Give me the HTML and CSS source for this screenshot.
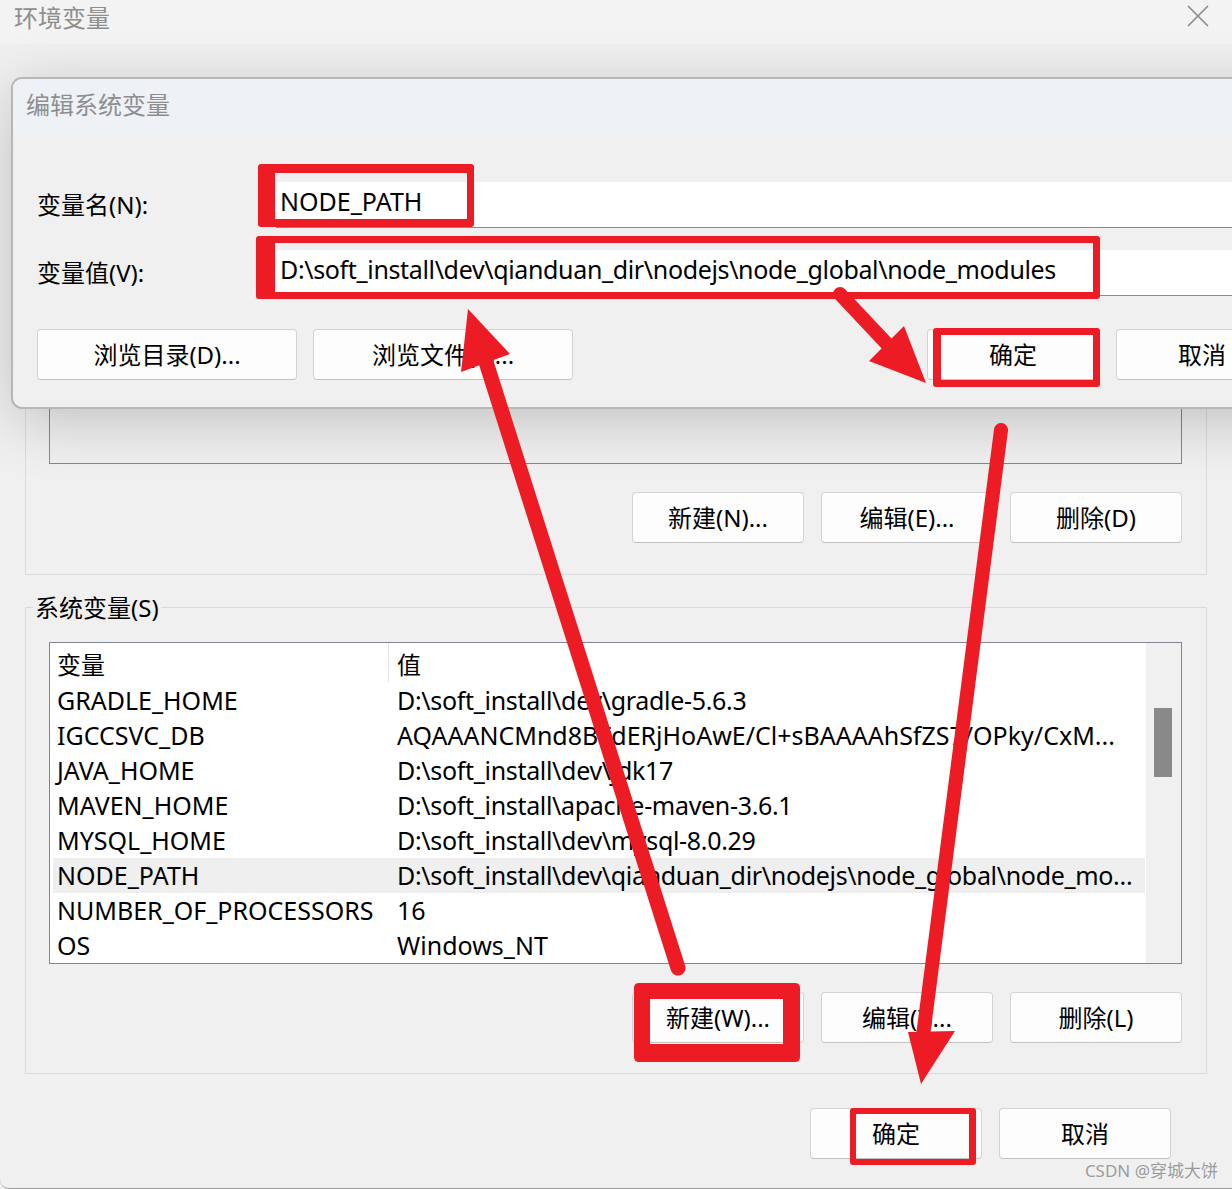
FILE: index.html
```html
<!DOCTYPE html>
<html lang="zh-CN">
<head>
<meta charset="utf-8">
<title>环境变量</title>
<link rel="stylesheet" href="styles.css">
</head>
<body>
<div class="window">
  <div class="titlebar">
    <span class="title">环境变量</span>
    <svg class="close" width="22" height="22" viewBox="0 0 22 22"><path d="M1 1 L21 21 M21 1 L1 21" stroke="#8a8a8a" stroke-width="1.6" fill="none"/></svg>
  </div>

  <div class="main">
    <div class="group group-user">
      <div class="listbox listbox-user"></div>
      <div class="btnrow">
        <button class="btn">新建(N)...</button>
        <button class="btn">编辑(E)...</button>
        <button class="btn">删除(D)</button>
      </div>
    </div>

    <div class="group group-sys">
      <div class="group-title">系统变量(S)</div>
      <div class="listbox listbox-sys">
        <div class="list-main">
          <div class="list-head">
            <span class="c1">变量</span><span class="sep"></span><span class="c2">值</span>
          </div>
          <div class="row"><span class="c1">GRADLE_HOME</span><span class="c2 path">D:\soft_install\dev\gradle-5.6.3</span></div>
          <div class="row"><span class="c1">IGCCSVC_DB</span><span class="c2">AQAAANCMnd8BFdERjHoAwE/Cl+sBAAAAhSfZS7/OPky/CxM...</span></div>
          <div class="row"><span class="c1">JAVA_HOME</span><span class="c2 path">D:\soft_install\dev\jdk17</span></div>
          <div class="row"><span class="c1">MAVEN_HOME</span><span class="c2 path">D:\soft_install\apache-maven-3.6.1</span></div>
          <div class="row"><span class="c1">MYSQL_HOME</span><span class="c2 path">D:\soft_install\dev\mysql-8.0.29</span></div>
          <div class="row sel"><span class="c1">NODE_PATH</span><span class="c2 path">D:\soft_install\dev\qianduan_dir\nodejs\node_global\node_mo...</span></div>
          <div class="row"><span class="c1">NUMBER_OF_PROCESSORS</span><span class="c2">16</span></div>
          <div class="row"><span class="c1">OS</span><span class="c2">Windows_NT</span></div>
        </div>
        <div class="scrollbar"><div class="thumb"></div></div>
      </div>
      <div class="btnrow">
        <button class="btn">新建(W)...</button>
        <button class="btn">编辑(I)...</button>
        <button class="btn">删除(L)</button>
      </div>
    </div>

    <div class="footer">
      <button class="btn">确定</button>
      <button class="btn">取消</button>
    </div>
  </div>

  <div class="dialog">
    <div class="dlg-title">编辑系统变量</div>
    <div class="dlg-body">
      <div class="field">
        <span class="field-label">变量名(N):</span>
        <div class="input">NODE_PATH</div>
      </div>
      <div class="field field-2">
        <span class="field-label">变量值(V):</span>
        <div class="input input-long">D:\soft_install\dev\qianduan_dir\nodejs\node_global\node_modules</div>
      </div>
      <div class="dlg-btns">
        <button class="btn btn-wide">浏览目录(D)...</button>
        <button class="btn btn-wide">浏览文件(F)...</button>
        <button class="btn btn-ok">确定</button>
        <button class="btn">取消</button>
      </div>
    </div>
  </div>

  <svg class="annot" width="1232" height="1189" viewBox="0 0 1232 1189">
    <g fill="#ed1c24" fill-rule="evenodd">
      <path d="M261 164 H471 Q474 164 474 167 V224 Q474 227 471 227 H261 Q258 227 258 224 V167 Q258 164 261 164 Z M275 173 V219 H467 V173 Z"/>
      <path d="M259 236 H1097 Q1100 236 1100 239 V296 Q1100 299 1097 299 H259 Q256 299 256 296 V239 Q256 236 259 236 Z M275 243 V292 H1093 V243 Z"/>
      <path d="M936 328 H1097 Q1100 328 1100 331 V384 Q1100 387 1097 387 H936 Q933 387 933 384 V331 Q933 328 936 328 Z M941 335 V380 H1093 V335 Z"/>
      <path d="M639 983 H795 Q800 983 800 988 V1057 Q800 1062 795 1062 H639 Q634 1062 634 1057 V988 Q634 983 639 983 Z M650 999 V1044 H783 V999 Z"/>
      <path d="M853 1108 H973 Q976 1108 976 1111 V1162 Q976 1165 973 1165 H853 Q850 1165 850 1162 V1111 Q850 1108 853 1108 Z M856 1114 V1159 H969 V1114 Z"/>
    </g>
    <g stroke="#ed1c24" stroke-linecap="round" fill="none">
      <line x1="678" y1="968" x2="486" y2="362" stroke-width="15"/>
      <line x1="840" y1="294" x2="888" y2="345" stroke-width="14"/>
      <line x1="1001" y1="430" x2="923" y2="1036" stroke-width="14"/>
    </g>
    <g fill="#ed1c24">
      <polygon points="468,309 461,372 510,354"/>
      <polygon points="926,383 869,361 904,326"/>
      <polygon points="908,1032 955,1031 921,1084"/>
    </g>
  </svg>

  <div class="watermark">CSDN @穿城大饼</div>
</div>
</body>
</html>
```

FILE: styles.css
```css
html, body {
  margin: 0;
  padding: 0;
  overflow: hidden;
  background: #f0f0f0;
}

body {
  font-family: "Noto Sans", "Noto Sans CJK SC", sans-serif;
  font-size: 24px;
  color: #000;
}

.window {
  position: relative;
  width: 1232px;
  height: 1189px;
  box-sizing: border-box;
  background: #f0f0f0;
  border-bottom: 1px solid #9a9a9a;
  border-bottom-left-radius: 9px;
  overflow: hidden;
}

/* ---------- title bar ---------- */
.titlebar {
  height: 44px;
  box-sizing: border-box;
  background: #f3f3f3;
  display: flex;
  justify-content: space-between;
  align-items: flex-start;
  padding: 2px 23px 0 14px;
}

.title {
  color: #8e8e8e;
  font-size: 24px;
  line-height: 30px;
  font-family: "Noto Sans CJK SC", sans-serif;
}

.close {
  margin-top: 3px;
}

/* ---------- main content ---------- */
.main {
  padding: 0 25px;
}

.group {
  border: 1px solid #dadada;
  box-sizing: border-box;
  display: flex;
  flex-direction: column;
}

.group-user {
  margin-top: 46px;
  height: 485px;
  justify-content: flex-end;
  padding: 0 24px 31px 23px;
}

.listbox {
  border: 1px solid #83868e;
  box-sizing: border-box;
}

.listbox-user {
  height: 300px;
}

.btnrow {
  display: flex;
  justify-content: flex-end;
  gap: 17px;
  margin-top: 28px;
}

.btn {
  width: 172px;
  height: 51px;
  box-sizing: border-box;
  background: #fdfdfd;
  border: 1px solid #d3d3d3;
  border-bottom-color: #c2c2c2;
  border-radius: 4px;
  font-family: "Noto Sans", "Noto Sans CJK SC", sans-serif;
  font-size: 24px;
  color: #000;
  padding: 0;
  line-height: 49px;
}

.group-sys {
  margin-top: 32px;
  padding: 0 24px 30px 23px;
}

.group-title {
  margin-top: -14px;
  margin-left: -16px;
  padding: 0 2px;
  line-height: 28px;
  background: #f0f0f0;
  width: fit-content;
}

.listbox-sys {
  margin-top: 20px;
  height: 322px;
  background: #fff;
  display: flex;
}

.list-main {
  flex: 1;
  min-width: 0;
  overflow: hidden;
  padding: 0 1px 0 3px;
}

.list-head {
  height: 40px;
  display: flex;
  align-items: center;
}

.list-head .c1 {
  width: 335px;
  padding-left: 4px;
  box-sizing: border-box;
}

.sep {
  align-self: flex-start;
  width: 1px;
  height: 39px;
  background: #e3e3e3;
}

.list-head .c2 {
  padding-left: 8px;
}

.row {
  height: 35px;
  line-height: 34px;
  display: flex;
  white-space: nowrap;
  font-size: 25px;
}

.row .c1 {
  flex: none;
  width: 344px;
  padding-left: 4px;
  box-sizing: border-box;
}

.row .c2 {
  min-width: 0;
  overflow: hidden;
}

.row .path {
  letter-spacing: -0.32px;
}

.row.sel {
  background: #efefef;
}

.scrollbar {
  flex: none;
  width: 35px;
  background: #f0f0f0;
}

.thumb {
  margin: 65px 0 0 8px;
  width: 18px;
  height: 69px;
  background: #898989;
}

.footer {
  display: flex;
  justify-content: flex-end;
  gap: 17px;
  margin-top: 34px;
  padding-right: 36px;
}

/* ---------- overlay dialog ---------- */
.dialog {
  position: absolute;
  left: 11px;
  top: 77px;
  width: 1303px;
  height: 332px;
  box-sizing: border-box;
  border: 2px solid #b7b7b7;
  border-radius: 11px;
  background: #f0f0f0;
  overflow: hidden;
  box-shadow: 0 12px 60px rgba(0, 0, 0, 0.2);
  display: flex;
  flex-direction: column;
}

.dlg-title {
  height: 55px;
  background: #eef2f6;
  padding-left: 13px;
  line-height: 50px;
  color: #8e8e8e;
  font-family: "Noto Sans CJK SC", sans-serif;
  font-size: 24px;
}

.dlg-body {
  flex: 1;
  padding: 48px 24px 0 24px;
}

.field {
  display: flex;
  align-items: center;
}

.field-2 {
  margin-top: 22px;
}

.field-label {
  width: 239px;
  flex: none;
  padding-bottom: 4px;
}

.input {
  flex: 1;
  height: 46px;
  box-sizing: border-box;
  background: #fff;
  border-bottom: 1px solid #8b8b8b;
  padding-left: 4px;
  font-size: 25px;
  line-height: 39px;
  white-space: nowrap;
}

.input-long {
  letter-spacing: -0.35px;
}

.dlg-btns {
  display: flex;
  gap: 16px;
  margin-top: 33px;
}

.btn-wide {
  width: 260px;
}

.btn-ok {
  margin-left: auto;
}

.dlg-btns .btn-ok + .btn {
  margin-left: 1px;
}

/* ---------- annotations ---------- */
.annot {
  position: absolute;
  left: 0;
  top: 0;
  pointer-events: none;
}

.watermark {
  position: absolute;
  right: 14px;
  bottom: 6px;
  font-size: 17px;
  line-height: 22px;
  color: rgba(140, 140, 140, 0.85);
  font-family: "Noto Sans", "Noto Sans CJK SC", sans-serif;
}
```
